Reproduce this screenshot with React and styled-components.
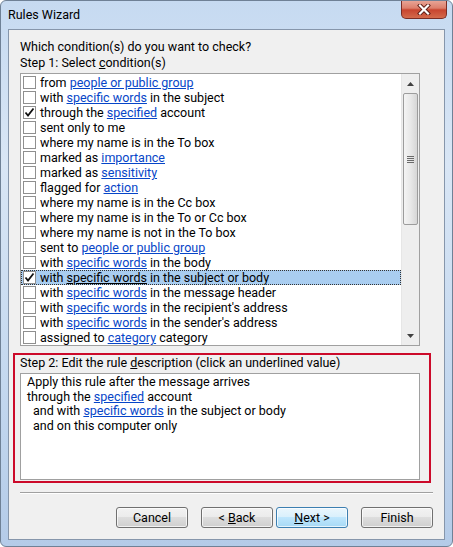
import React from "react";
import styled, { createGlobalStyle } from "styled-components";

const GlobalStyle = createGlobalStyle`
  html, body {
    margin: 0;
    padding: 0;
    background: #ffffff;
  }
  body {
    font-family: Roboto, "Noto Sans", sans-serif;
    font-size: 12.5px;
    color: #000;
  }
`;

const conditions = [
  { text: "from [people or public group]" },
  { text: "with [specific words] in the subject" },
  { text: "through the [specified] account", checked: true },
  { text: "sent only to me" },
  { text: "where my name is in the To box" },
  { text: "marked as [importance]" },
  { text: "marked as [sensitivity]" },
  { text: "flagged for [action]" },
  { text: "where my name is in the Cc box" },
  { text: "where my name is in the To or Cc box" },
  { text: "where my name is not in the To box" },
  { text: "sent to [people or public group]" },
  { text: "with [specific words] in the body" },
  { text: "with [specific words] in the subject or body", checked: true, selected: true },
  { text: "with [specific words] in the message header" },
  { text: "with [specific words] in the recipient's address" },
  { text: "with [specific words] in the sender's address" },
  { text: "assigned to [category] category" },
];

// "[...]" marks an underlined value
const splitLinks = (text) =>
  text.split(/(\[[^\]]+\])/).filter(Boolean).map((part) =>
    part.startsWith("[") ? { link: true, value: part.slice(1, -1) } : { link: false, value: part }
  );

const Window = styled.div`
  width: 453px;
  height: 547px;
  box-sizing: border-box;
  display: flex;
  flex-direction: column;
  background: linear-gradient(to bottom, #c6daf1 0%, #d9e6f5 30%, #c4d8ef 70%, #b4cbe8 100%);
  border: 1px solid #6f8196;
  border-radius: 6px;
  overflow: hidden;
`;

const TitleBar = styled.div`
  height: 28px;
  display: flex;
  align-items: flex-start;
  padding-left: 7px;
`;

const Title = styled.div`
  margin-top: 6px;
  line-height: 16px;
`;

const CloseButton = styled.div`
  margin-left: auto;
  margin-right: 5px;
  margin-top: -1px;
  width: 46px;
  height: 19px;
  box-sizing: border-box;
  border: 1px solid #7a2d25;
  border-top: none;
  border-radius: 0 0 5px 5px;
  background: linear-gradient(to bottom, #e9a99b 0%, #dc7f6c 45%, #c8452f 55%, #d46a4c 100%);
  display: flex;
  align-items: center;
  justify-content: center;
`;

const Client = styled.div`
  flex: 1;
  margin: 0 7px 6px 7px;
  background: #f0f0f0;
  border: 1px solid #8696ab;
  padding: 9px 11px 0 11px;
  display: flex;
  flex-direction: column;
`;

const Label = styled.div`
  line-height: 16px;
  white-space: nowrap;
`;

const Key = styled.span`
  text-decoration: underline;
`;

const ListBox = styled.div`
  margin-top: 2px;
  width: 400px;
  height: 273px;
  box-sizing: border-box;
  border: 1px solid #a0a0a0;
  background: #fff;
  display: flex;
`;

const Rows = styled.div`
  flex: 1;
  padding-top: 1px;
  overflow: hidden;
`;

const Row = styled.div`
  height: 15px;
  line-height: 15px;
  box-sizing: border-box;
  display: flex;
  align-items: center;
  padding-left: 2px;
  white-space: nowrap;
  background: ${(p) => (p.$selected ? "#a9cdf0" : "transparent")};
  outline: ${(p) => (p.$selected ? "1px dotted #333" : "none")};
  outline-offset: -1px;
`;

const Box = styled.span`
  width: 13px;
  height: 13px;
  box-sizing: border-box;
  border: 1px solid #8f8f8f;
  background: #fff;
  margin-right: 4px;
  flex: none;
  display: flex;
  align-items: center;
  justify-content: center;
`;

const LinkText = styled.span`
  color: ${(p) => (p.$plain ? "#000" : "#0645c8")};
  text-decoration: underline;
`;

const ScrollBar = styled.div`
  width: 17px;
  display: flex;
  flex-direction: column;
  background: #eeeeee;
  border-left: 1px solid #e6e6e6;
`;

const Arrow = styled.div`
  height: 19px;
  flex: none;
  display: flex;
  align-items: center;
  justify-content: center;
`;

const Track = styled.div`
  flex: 1;
  padding: 0 1px;
`;

const Thumb = styled.div`
  height: 132px;
  box-sizing: border-box;
  border: 1px solid #9c9c9c;
  border-radius: 2px;
  background: linear-gradient(to right, #f4f4f4 0%, #e8e8e8 50%, #d6d6d6 100%);
  display: flex;
  align-items: center;
  justify-content: center;
`;

const Grip = styled.div`
  width: 7px;
  display: flex;
  flex-direction: column;
  gap: 1px;
  span {
    height: 1px;
    background: #6a6a6a;
  }
`;

const Group = styled.div`
  margin: 7px 0 0 -7px;
  width: 418px;
  height: 130px;
  box-sizing: border-box;
  border: 2px solid #cc0a2a;
  padding: 0 9px 0 5px;
  display: flex;
  flex-direction: column;
`;

const Description = styled.div`
  margin-top: 2px;
  height: 107px;
  box-sizing: border-box;
  border: 1px solid #a0a0a0;
  background: #fff;
  padding: 1px 6px;
`;

const DescLine = styled.div`
  line-height: 14.7px;
  white-space: nowrap;
  padding-left: ${(p) => (p.$indent ? "6px" : "0")};
`;

const Separator = styled.div`
  margin-top: 9px;
  height: 1px;
  background: #a0a0a0;
  border-bottom: 1px solid #ffffff;
`;

const ButtonRow = styled.div`
  margin-top: 13px;
  display: flex;
  justify-content: flex-end;
`;

const Button = styled.div`
  width: 72px;
  height: 21px;
  box-sizing: border-box;
  margin-left: ${(p) => p.$gap || 0}px;
  border: 1px solid ${(p) => (p.$default ? "#3c7fb1" : "#707070")};
  border-radius: 3px;
  background: ${(p) =>
    p.$default
      ? "linear-gradient(to bottom, #eaf6fd 0%, #d9f0fc 50%, #bee6fd 50%, #a7d9f5 100%)"
      : "linear-gradient(to bottom, #f2f2f2 0%, #ebebeb 50%, #dddddd 50%, #cfcfcf 100%)"};
  box-shadow: inset 0 0 0 1px rgba(255, 255, 255, 0.7);
  display: flex;
  align-items: center;
  justify-content: center;
  line-height: 15px;
`;

const Check = () => (
  <svg width="11" height="11" viewBox="0 0 11 11">
    <path d="M1.5 5.5 L4 8.5 L9.5 1.5" fill="none" stroke="#111" strokeWidth="1.8" />
  </svg>
);

const Condition = ({ item }) => (
  <Row $selected={item.selected}>
    <Box>{item.checked && <Check />}</Box>
    <span>
      {splitLinks(item.text).map((p, i) =>
        p.link ? (
          <LinkText key={i} $plain={item.selected}>
            {p.value}
          </LinkText>
        ) : (
          <span key={i}>{p.value}</span>
        )
      )}
    </span>
  </Row>
);

export default function App() {
  return (
    <>
      <GlobalStyle />
      <Window>
        <TitleBar>
          <Title>Rules Wizard</Title>
          <CloseButton>
            <svg width="14" height="11" viewBox="0 0 14 11">
              <path d="M3 1.5 L11 9.5 M11 1.5 L3 9.5" stroke="#5a1b14" strokeWidth="4" strokeLinecap="square" />
              <path d="M3 1.5 L11 9.5 M11 1.5 L3 9.5" stroke="#ffffff" strokeWidth="2.2" strokeLinecap="square" />
            </svg>
          </CloseButton>
        </TitleBar>
        <Client>
          <Label>Which condition(s) do you want to check?</Label>
          <Label>
            Step 1: Select <Key>c</Key>ondition(s)
          </Label>
          <ListBox>
            <Rows>
              {conditions.map((c, i) => (
                <Condition key={i} item={c} />
              ))}
            </Rows>
            <ScrollBar>
              <Arrow>
                <svg width="7" height="4" viewBox="0 0 7 4">
                  <path d="M0 4 L3.5 0 L7 4 Z" fill="#404040" />
                </svg>
              </Arrow>
              <Track>
                <Thumb>
                  <Grip>
                    <span />
                    <span />
                    <span />
                    <span />
                  </Grip>
                </Thumb>
              </Track>
              <Arrow>
                <svg width="7" height="4" viewBox="0 0 7 4">
                  <path d="M0 0 L7 0 L3.5 4 Z" fill="#404040" />
                </svg>
              </Arrow>
            </ScrollBar>
          </ListBox>
          <Group>
            <Label>
              Step 2: Edit the rule <Key>d</Key>escription (click an underlined value)
            </Label>
            <Description>
              <DescLine>Apply this rule after the message arrives</DescLine>
              <DescLine>
                through the <LinkText>specified</LinkText> account
              </DescLine>
              <DescLine $indent>
                and with <LinkText>specific words</LinkText> in the subject or body
              </DescLine>
              <DescLine $indent>and on this computer only</DescLine>
            </Description>
          </Group>
          <Separator />
          <ButtonRow>
            <Button>Cancel</Button>
            <Button $gap={13}>
              &lt;&nbsp;<Key>B</Key>ack
            </Button>
            <Button $gap={3} $default>
              <Key>N</Key>ext &gt;
            </Button>
            <Button $gap={13}>Finish</Button>
          </ButtonRow>
        </Client>
      </Window>
    </>
  );
}
